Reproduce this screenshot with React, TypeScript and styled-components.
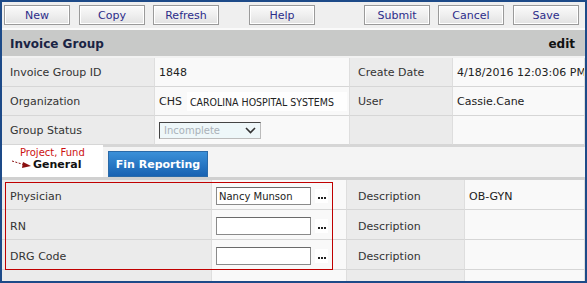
import React from 'react';
import styled, {createGlobalStyle} from 'styled-components';

const GlobalStyle = createGlobalStyle`
  body {
    margin: 0;
    font-family: "DejaVu Sans", Verdana, sans-serif;
    font-size: 11px;
    color: #333;
  }
`

const Frame = styled.div`
  width: 587px;
  height: 283px;
  box-sizing: border-box;
  border: 2px solid #1d4a88;
  background: #f9f9f9;
  overflow: hidden;
`

const Toolbar = styled.div`
  height: 28px;
  box-sizing: border-box;
  padding: 3px 0 0 2px;
  display: flex;
  background: #efefef;
  border-bottom: 2px solid #fafafa;
`

const ToolButton = styled.button<{ $gap: number }>`
  width: 66px;
  height: 20px;
  margin-left: ${p => p.$gap}px;
  padding: 0;
  font-family: "DejaVu Sans", Verdana, sans-serif;
  font-size: 11px;
  color: #2c2c8a;
  background: linear-gradient(#fbfbfb, #e2e2e2);
  border: 1px solid #9a9a9a;
  box-shadow: inset 0 0 0 1px #fff;
`

const HeaderBar = styled.div`
  height: 28px;
  padding: 1px 10px 0 8px;
  box-sizing: border-box;
  display: flex;
  align-items: center;
  justify-content: space-between;
  background: #c8c9c8;
  border-bottom: 2px solid #f2f2f2;
  font-weight: bold;
  font-size: 12px;
  color: #1a2444;
`

const EditLabel = styled.span`
  color: #111;
`

const Grid = styled.div<{ $cols: string }>`
  display: grid;
  grid-template-columns: ${p => p.$cols};
  position: relative;
`

const Cell = styled.div<{ $label?: boolean; $h?: number; $top?: number }>`
  height: ${p => p.$h ?? 29}px;
  box-sizing: border-box;
  display: flex;
  align-items: center;
  padding-top: ${p => p.$top ?? 1}px;
  padding-left: ${p => (p.$label ? 8 : 4)}px;
  background: ${p => (p.$label ? '#ebebeb' : '#f9f9f9')};
  border-bottom: 1px solid #d6d6d6;
  border-right: 1px solid #dedede;
  color: ${p => (p.$label ? '#333' : '#222')};
  white-space: nowrap;
  overflow: hidden;
`

const DescLabel = styled(Cell)`
  padding-left: 11px;
`

const OrgCode = styled.span`
  margin-right: 5px;
`

const OrgName = styled.span`
  flex: 1;
  align-self: stretch;
  margin: 4px 2px 4px 0;
  padding-left: 3px;
  display: flex;
  align-items: center;
  background: #fefefe;
  font-family: "DejaVu Sans Condensed", "DejaVu Sans", sans-serif;
  font-size: 10.5px;
`

const Select = styled.div`
  width: 102px;
  height: 17px;
  box-sizing: border-box;
  display: flex;
  align-items: center;
  justify-content: space-between;
  padding: 0 4px 0 4px;
  background: #eef7f9;
  border: 1px solid #bbb;
  border-top-color: #444;
  border-left-color: #444;
  font-size: 10px;
  color: #a9b1b8;
`

const TabBar = styled.div`
  height: 35px;
  box-sizing: border-box;
  display: flex;
  background: #f4f4f4;
  border-bottom: 3px solid #d0d0d0;
`

const ActiveTab = styled.div`
  width: 101px;
  background: #fff;
  padding: 2px 0 0 10px;
  box-sizing: border-box;
`

const TabNote = styled.div`
  padding-left: 8px;
  font-size: 10px;
  line-height: 11px;
  color: #cc1111;
`

const TabTitle = styled.div`
  display: flex;
  align-items: center;
  gap: 1px;
  font-weight: bold;
  font-size: 11px;
  color: #111;
`

const TabStrip = styled.div`
  flex: 1;
  border-top: 2px solid #d6d6d6;
  padding: 4px 0 0 5px;
`

const TabButton = styled.div`
  width: 100px;
  height: 26px;
  box-sizing: border-box;
  display: flex;
  align-items: center;
  justify-content: center;
  background: linear-gradient(#3b90d8, #1862b2);
  border: 1px solid #2a6aa8;
  color: #fff;
  font-weight: bold;
  font-size: 11px;
`

const TextInput = styled.input`
  width: 95px;
  height: 18px;
  box-sizing: border-box;
  padding: 0 2px;
  border: 1px solid #8a8a8a;
  border-top-color: #6a6a6a;
  background: #fff;
  font-family: "DejaVu Sans", Verdana, sans-serif;
  font-size: 10px;
  color: #222;
`

const LookupButton = styled.span`
  width: 13px;
  height: 14px;
  margin-left: 4px;
  display: flex;
  align-items: center;
  justify-content: center;
  gap: 1px;
  background: #fff;
`

const Dot = styled.i`
  width: 2px;
  height: 2px;
  margin-top: 3px;
  background: #222;
`

const Highlight = styled.div`
  position: absolute;
  left: 3px;
  top: 2px;
  width: 328px;
  height: 88px;
  box-sizing: border-box;
  border: 1px solid #c00000;
  pointer-events: none;
`

const buttons = [
    {label: 'New', gap: 0},
    {label: 'Copy', gap: 9},
    {label: 'Refresh', gap: 8},
    {label: 'Help', gap: 30},
    {label: 'Submit', gap: 49},
    {label: 'Cancel', gap: 8},
    {label: 'Save', gap: 9},
]

const lowerRows = [
    {label: 'Physician', value: 'Nancy Munson', desc: 'OB-GYN'},
    {label: 'RN', value: '', desc: ''},
    {label: 'DRG Code', value: '', desc: ''},
]

const Chevron = () => (
    <svg width="11" height="7" viewBox="0 0 11 7">
        <path d="M1 1 L5.5 5.5 L10 1" stroke="#333" strokeWidth="1.6" fill="none"/>
    </svg>
)

const NoteArrow = () => (
    <svg width="20" height="9" viewBox="0 0 20 9">
        <path d="M0 1 L13 5" stroke="#8a1010" strokeWidth="1" strokeDasharray="2 1.5" fill="none"/>
        <path d="M11 2 L19 6 L10 8 Z" fill="#8a1010"/>
    </svg>
)

const App = () => {
    return (<>
        <GlobalStyle/>
        <Frame>
            <Toolbar>
                {buttons.map(b => <ToolButton key={b.label} $gap={b.gap}>{b.label}</ToolButton>)}
            </Toolbar>
            <HeaderBar>
                <span>Invoice Group</span>
                <EditLabel>edit</EditLabel>
            </HeaderBar>
            <Grid $cols="153px 195px 103px 1fr">
                <Cell $label>Invoice Group ID</Cell>
                <Cell>1848</Cell>
                <Cell $label>Create Date</Cell>
                <Cell>4/18/2016 12:03:06 PM</Cell>

                <Cell $label>Organization</Cell>
                <Cell><OrgCode>CHS</OrgCode><OrgName>CAROLINA HOSPITAL SYSTEMS</OrgName></Cell>
                <Cell $label>User</Cell>
                <Cell>Cassie.Cane</Cell>

                <Cell $label>Group Status</Cell>
                <Cell><Select><span>Incomplete</span><Chevron/></Select></Cell>
                <Cell $label/>
                <Cell/>
            </Grid>
            <TabBar>
                <ActiveTab>
                    <TabNote>Project, Fund</TabNote>
                    <TabTitle><NoteArrow/>General</TabTitle>
                </ActiveTab>
                <TabStrip>
                    <TabButton>Fin Reporting</TabButton>
                </TabStrip>
            </TabBar>
            <Grid $cols="210px 135px 118px 1fr">
                {lowerRows.map(r => (
                    <React.Fragment key={r.label}>
                        <Cell $label $h={30} $top={3}>{r.label}</Cell>
                        <Cell $h={30} $top={3}>
                            <TextInput defaultValue={r.value} readOnly/>
                            <LookupButton><Dot/><Dot/><Dot/></LookupButton>
                        </Cell>
                        <DescLabel $label $h={30} $top={3}>Description</DescLabel>
                        <Cell $h={30} $top={3}>{r.desc}</Cell>
                    </React.Fragment>
                ))}
                <Cell $label $h={12}/>
                <Cell $h={12}/>
                <Cell $label $h={12}/>
                <Cell $h={12}/>
                <Highlight/>
            </Grid>
        </Frame>
    </>);
};

export default App;
